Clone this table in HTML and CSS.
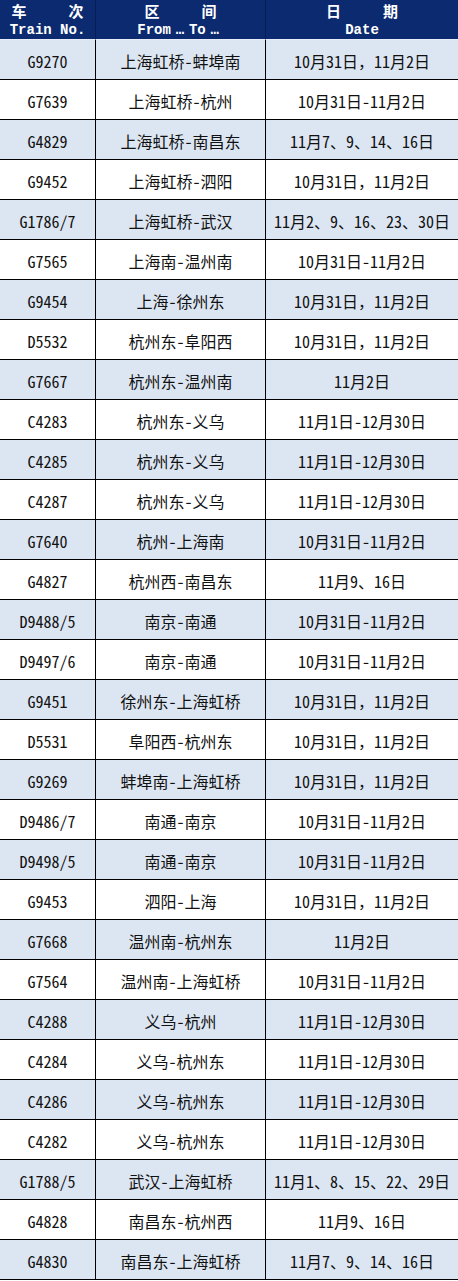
FILE: index.html
```html
<!DOCTYPE html>
<html lang="zh-CN">
<head>
<meta charset="utf-8">
<title>列车时刻</title>
<link rel="stylesheet" href="styles.css">
</head>
<body>
<div class="sheet">
  <div class="row head">
    <div class="cell"><div class="cn"><span>车</span><span>次</span></div><div class="en">Train No.</div></div>
    <div class="cell"><div class="cn"><span>区</span><span>间</span></div><div class="en">From<span class="dots">…</span>To<span class="dots">…</span></div></div>
    <div class="cell"><div class="cn"><span>日</span><span>期</span></div><div class="en">Date</div></div>
  </div>
  <div class="row"><div class="cell">G9270</div><div class="cell">上海虹桥-蚌埠南</div><div class="cell">10月31日，11月2日</div></div>
  <div class="row"><div class="cell">G7639</div><div class="cell">上海虹桥-杭州</div><div class="cell">10月31日-11月2日</div></div>
  <div class="row"><div class="cell">G4829</div><div class="cell">上海虹桥-南昌东</div><div class="cell">11月7、9、14、16日</div></div>
  <div class="row"><div class="cell">G9452</div><div class="cell">上海虹桥-泗阳</div><div class="cell">10月31日，11月2日</div></div>
  <div class="row"><div class="cell">G1786/7</div><div class="cell">上海虹桥-武汉</div><div class="cell">11月2、9、16、23、30日</div></div>
  <div class="row"><div class="cell">G7565</div><div class="cell">上海南-温州南</div><div class="cell">10月31日-11月2日</div></div>
  <div class="row"><div class="cell">G9454</div><div class="cell">上海-徐州东</div><div class="cell">10月31日，11月2日</div></div>
  <div class="row"><div class="cell">D5532</div><div class="cell">杭州东-阜阳西</div><div class="cell">10月31日，11月2日</div></div>
  <div class="row"><div class="cell">G7667</div><div class="cell">杭州东-温州南</div><div class="cell">11月2日</div></div>
  <div class="row"><div class="cell">C4283</div><div class="cell">杭州东-义乌</div><div class="cell">11月1日-12月30日</div></div>
  <div class="row"><div class="cell">C4285</div><div class="cell">杭州东-义乌</div><div class="cell">11月1日-12月30日</div></div>
  <div class="row"><div class="cell">C4287</div><div class="cell">杭州东-义乌</div><div class="cell">11月1日-12月30日</div></div>
  <div class="row"><div class="cell">G7640</div><div class="cell">杭州-上海南</div><div class="cell">10月31日-11月2日</div></div>
  <div class="row"><div class="cell">G4827</div><div class="cell">杭州西-南昌东</div><div class="cell">11月9、16日</div></div>
  <div class="row"><div class="cell">D9488/5</div><div class="cell">南京-南通</div><div class="cell">10月31日-11月2日</div></div>
  <div class="row"><div class="cell">D9497/6</div><div class="cell">南京-南通</div><div class="cell">10月31日-11月2日</div></div>
  <div class="row"><div class="cell">G9451</div><div class="cell">徐州东-上海虹桥</div><div class="cell">10月31日，11月2日</div></div>
  <div class="row"><div class="cell">D5531</div><div class="cell">阜阳西-杭州东</div><div class="cell">10月31日，11月2日</div></div>
  <div class="row"><div class="cell">G9269</div><div class="cell">蚌埠南-上海虹桥</div><div class="cell">10月31日，11月2日</div></div>
  <div class="row"><div class="cell">D9486/7</div><div class="cell">南通-南京</div><div class="cell">10月31日-11月2日</div></div>
  <div class="row"><div class="cell">D9498/5</div><div class="cell">南通-南京</div><div class="cell">10月31日-11月2日</div></div>
  <div class="row"><div class="cell">G9453</div><div class="cell">泗阳-上海</div><div class="cell">10月31日，11月2日</div></div>
  <div class="row"><div class="cell">G7668</div><div class="cell">温州南-杭州东</div><div class="cell">11月2日</div></div>
  <div class="row"><div class="cell">G7564</div><div class="cell">温州南-上海虹桥</div><div class="cell">10月31日-11月2日</div></div>
  <div class="row"><div class="cell">C4288</div><div class="cell">义乌-杭州</div><div class="cell">11月1日-12月30日</div></div>
  <div class="row"><div class="cell">C4284</div><div class="cell">义乌-杭州东</div><div class="cell">11月1日-12月30日</div></div>
  <div class="row"><div class="cell">C4286</div><div class="cell">义乌-杭州东</div><div class="cell">11月1日-12月30日</div></div>
  <div class="row"><div class="cell">C4282</div><div class="cell">义乌-杭州东</div><div class="cell">11月1日-12月30日</div></div>
  <div class="row"><div class="cell">G1788/5</div><div class="cell">武汉-上海虹桥</div><div class="cell">11月1、8、15、22、29日</div></div>
  <div class="row"><div class="cell">G4828</div><div class="cell">南昌东-杭州西</div><div class="cell">11月9、16日</div></div>
  <div class="row"><div class="cell">G4830</div><div class="cell">南昌东-上海虹桥</div><div class="cell">11月7、9、14、16日</div></div>
</div>
</body>
</html>
```
FILE: styles.css
```css
html, body {
  margin: 0;
  padding: 0;
  background: #ffffff;
}

.sheet {
  width: 458px;
  font-family: "Noto Sans Mono CJK SC", "Noto Sans CJK SC", monospace;
  font-size: 16px;
  color: #111;
}

.row {
  display: grid;
  grid-template-columns: 96px 170px 192px;
  height: 40px;
  background: #ffffff;
}

.row:nth-child(even) {
  background: #dce6f2;
}

.cell {
  box-sizing: border-box;
  height: 40px;
  border-right: 1px solid #000;
  border-bottom: 1px solid #000;
  display: flex;
  align-items: center;
  justify-content: center;
  white-space: nowrap;
  padding-top: 2px;
}

.cell:last-child {
  border-right: none;
}

.head {
  background: #0b2a6f;
  color: #ffffff;
}

.head .cell {
  flex-direction: column;
  justify-content: flex-start;
  padding-top: 1px;
  border-bottom: 1px solid #e8eef8;
  border-right-color: #061d55;
  font-weight: bold;
}

.head .cn {
  display: flex;
  gap: 42px;
  height: 20px;
  font-size: 15px;
  line-height: 20px;
}

.head .en {
  font-family: "Liberation Mono", monospace;
  font-size: 14px;
  height: 18px;
  line-height: 18px;
}

.head .dots {
  display: inline-block;
  width: 18px;
  text-align: center;
}
```
